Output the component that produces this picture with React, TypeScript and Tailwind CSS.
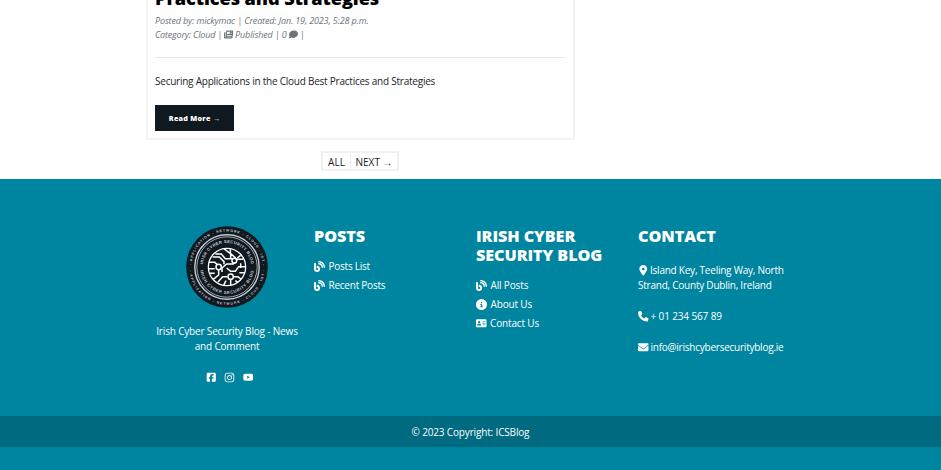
import type { ReactNode } from "react";
import {
  FaBlog, FaCircleInfo, FaAddressCard, FaLocationDot, FaPhone, FaEnvelope,
  FaSquareFacebook, FaInstagram, FaYoutube, FaComment, FaNewspaper,
} from "react-icons/fa6";

function Logo() {
  return (
    <svg viewBox="0 0 96 96" className="block h-[84px] w-[84px]" fontFamily="'Liberation Sans', sans-serif" fontWeight="bold" fill="#c3cbd1">
      <defs>
        <path id="outerTop" d="M7.5 48a40.5 40.5 0 0 1 81 0" />
        <path id="outerBottom" d="M4.8 48a43.2 43.2 0 0 0 86.4 0" />
        <path id="innerTop" d="M20.5 48a27.5 27.5 0 0 1 55 0" />
        <path id="innerBottom" d="M17.2 48a30.8 30.8 0 0 0 61.6 0" />
        <clipPath id="core"><circle cx="93" cy="93" r="56" /></clipPath>
      </defs>
      <circle cx="48" cy="48" r="46.7" fill="#101820" />
      <circle cx="48" cy="48" r="36.8" fill="none" stroke="#c3cbd1" strokeWidth="1.6" />
      <circle cx="48" cy="48" r="34.5" fill="none" stroke="#c3cbd1" strokeWidth="0.9" />
      <text fontSize="3.9"><textPath href="#outerTop" startOffset="2" textLength="123">- APPLICATION - NETWORK - CLOUD - IOT -</textPath></text>
      <text fontSize="3.9"><textPath href="#outerBottom" startOffset="4" textLength="128">- APPLICATION - NETWORK - CLOUD - IOT -</textPath></text>
      <text fontSize="4.8"><textPath href="#innerTop" startOffset="3" textLength="80">IRISH CYBER SECURITY BLOG</textPath></text>
      <text fontSize="4.8"><textPath href="#innerBottom" startOffset="4" textLength="88">IRISH CYBER SECURITY BLOG</textPath></text>
      <g transform="translate(48 48) scale(.381) translate(-93 -93)" fill="none" stroke="#fff" strokeWidth="4.6">
        <circle cx="93" cy="93" r="56" strokeWidth="3.8" />
        <g clipPath="url(#core)">
          <path d="M50 63h20l14 14v8M38 79h18l10 8M58 54h18l12 14h20M84 38l20 16v12M103 40v12l16 14M68 101v16l-20 16M38 98h18M38 112h18M78 108V96l14-12h20l12-14h18M92 96l12 10h14l10-14h22M94 122H80l-14 16M112 122h14l12 10M134 82v14M130 110h18M104 131v20M90 134l-8 16M118 134l12 8M134 58l-10 8" />
          <circle cx="68" cy="93" r="8" fill="#101820" />
          <circle cx="115" cy="74" r="7" fill="#101820" />
          <circle cx="104" cy="122" r="8" fill="#101820" />
        </g>
      </g>
    </svg>
  );
}

function Heading({ children }: { children: ReactNode }) {
  return <h5 className="text-[16.2px] leading-[19px] font-extrabold tracking-[-0.08px] whitespace-nowrap">{children}</h5>;
}

function Item({ icon, children }: { icon: ReactNode; children: ReactNode }) {
  return <li className="flex h-[19px] items-center gap-[3.5px] whitespace-nowrap">{icon}<span>{children}</span></li>;
}

const icon = "h-[11px] w-auto";
const inlineIcon = "mr-[2px] mb-[2px] inline h-[10.5px] w-auto align-middle";

export default function App() {
  return (
    <div className="h-[470px] w-[941px] overflow-hidden bg-white font-['Open_Sans','Noto_Sans',sans-serif] text-[10px] leading-[15px] tracking-[-0.235px] text-[#212529]">
      <main className="h-[179px]">
        <article className="ml-[146px] flex h-[140px] w-[429px] flex-col items-start border-2 border-t-0 border-[#f3f3f3] px-[7px]">
          <h2 className="mt-[-14px] h-[28px] text-[18.2px] leading-[25px] font-extrabold tracking-[-0.1px] whitespace-nowrap text-black">Practices and Strategies</h2>
          <div className="text-[9px] leading-[13.5px] tracking-[-0.14px] whitespace-nowrap text-[#6c757d] italic">
            <p>Posted by: mickymac | Created: Jan. 19, 2023, 5:28 p.m.</p>
            <p className="flex items-center gap-[2px]">
              <span className="tracking-[-0.18px]">Category: Cloud |</span><FaNewspaper className="h-[9px] w-auto -skew-x-6" /><span>Published | 0</span><FaComment className="h-[9px] w-auto -skew-x-6" /> |
            </p>
          </div>
          <hr className="mt-[16px] w-full border-[#e7e8e9]" />
          <p className="mt-[16px] whitespace-nowrap">Securing Applications in the Cloud Best Practices and Strategies</p>
          <a className="mt-[16px] flex h-[26px] w-[79px] items-center justify-center bg-[#101820] text-[7.2px] leading-[14px] font-extrabold tracking-[0.25px] text-white">Read More →</a>
        </article>
        <nav className="mt-[11px] ml-[321px] flex h-[20px] w-[78px] border-2 border-[#f1f1f1] leading-[18px] tracking-normal whitespace-nowrap">
          <a className="w-[28px] border-r border-[#ececec] text-center">ALL</a>
          <a className="flex-1 text-center">NEXT →</a>
        </nav>
      </main>
      <footer className="h-[291px] bg-[#0085a1] text-white">
        <div className="ml-[146px] grid h-[237px] grid-cols-[162px_162px_162px_162px] pt-[46px]">
          <div className="flex w-[162px] flex-col items-center text-center">
            <Logo />
            <p className="mt-[15px] tracking-[-0.17px] whitespace-nowrap">Irish Cyber Security Blog - News<br />and Comment</p>
            <div className="mt-[18px] ml-[5px] flex items-center gap-[7.5px]">
              <FaSquareFacebook className="h-[10.5px] w-auto" />
              <FaInstagram className="h-[11px] w-auto" />
              <FaYoutube className="h-[10.5px] w-auto" />
            </div>
          </div>
          <div className="pt-[2px] pl-[6px]">
            <Heading>POSTS</Heading>
            <ul className="mt-[11px]">
              <Item icon={<FaBlog className={icon} />}>Posts List</Item>
              <Item icon={<FaBlog className={icon} />}>Recent Posts</Item>
            </ul>
          </div>
          <div className="pt-[2px] pl-[6px]">
            <Heading>IRISH CYBER<br />SECURITY BLOG</Heading>
            <ul className="mt-[11px] tracking-[-0.15px]">
              <Item icon={<FaBlog className={icon} />}>All Posts</Item>
              <Item icon={<FaCircleInfo className={icon} />}>About Us</Item>
              <Item icon={<FaAddressCard className="h-[10.5px] w-auto" />}>Contact Us</Item>
            </ul>
          </div>
          <div className="pt-[2px] pl-[6px] whitespace-nowrap">
            <Heading>CONTACT</Heading>
            <p className="mt-[17px]"><FaLocationDot className="mr-[1.5px] mb-[2px] inline h-[10.5px] w-auto align-middle" />Island Key, Teeling Way, North<br />Strand, County Dublin, Ireland</p>
            <p className="mt-[16px] tracking-[-0.13px]"><FaPhone className={inlineIcon} />+ 01 234 567 89</p>
            <p className="mt-[16px]"><FaEnvelope className={inlineIcon} />info@irishcybersecurityblog.ie</p>
          </div>
        </div>
        <div className="h-[31px] bg-[#006a81] text-center leading-[32px] tracking-[-0.16px]">© 2023 Copyright: ICSBlog</div>
      </footer>
    </div>
  );
}
